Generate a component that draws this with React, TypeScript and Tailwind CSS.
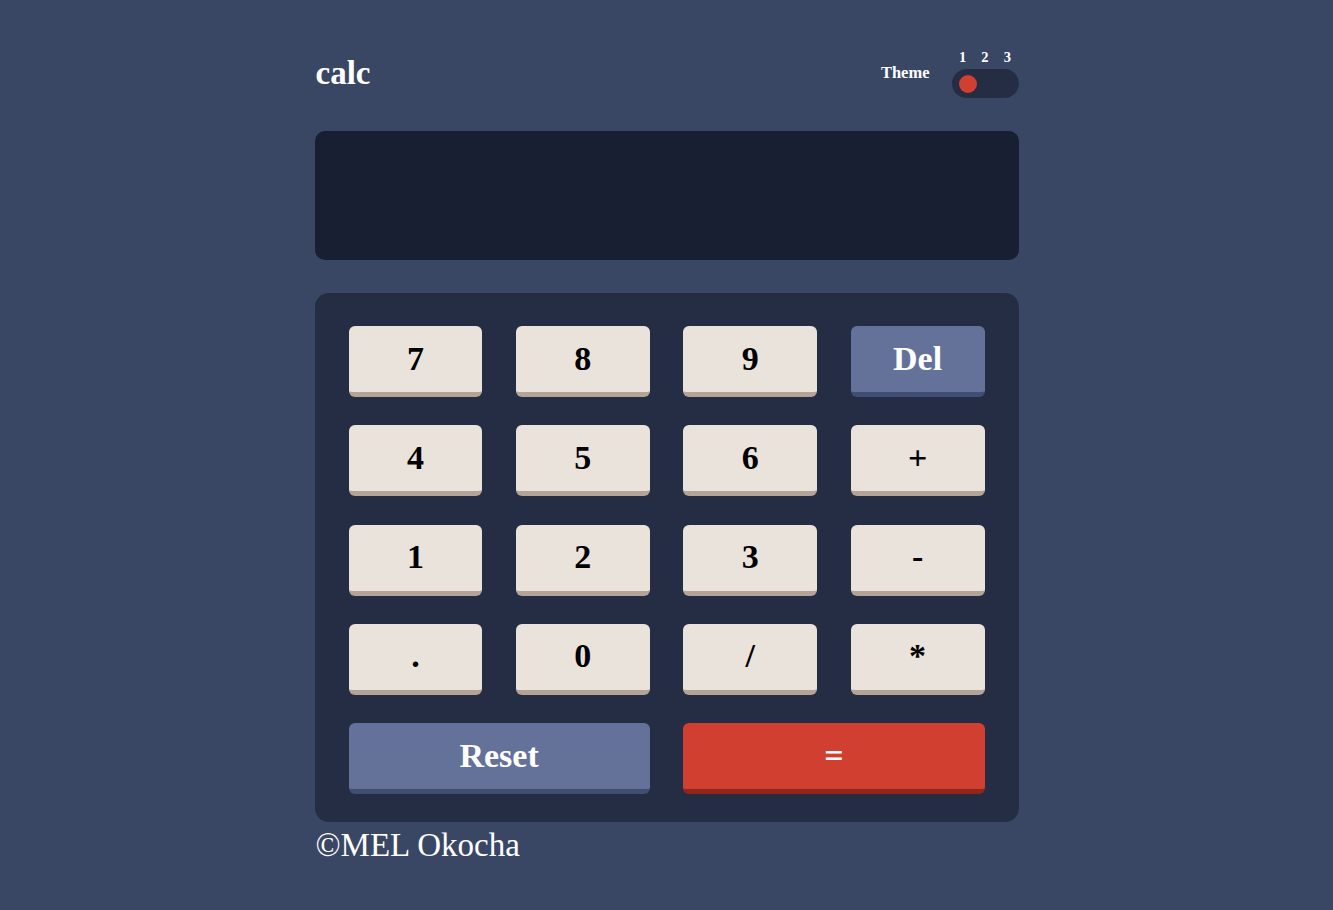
import React from 'react';

type Key = { label: string; kind: 'num' | 'del' | 'reset' | 'eq'; wide?: boolean };

const KEYS: Key[] = [
  { label: '7', kind: 'num' },
  { label: '8', kind: 'num' },
  { label: '9', kind: 'num' },
  { label: 'Del', kind: 'del' },
  { label: '4', kind: 'num' },
  { label: '5', kind: 'num' },
  { label: '6', kind: 'num' },
  { label: '+', kind: 'num' },
  { label: '1', kind: 'num' },
  { label: '2', kind: 'num' },
  { label: '3', kind: 'num' },
  { label: '-', kind: 'num' },
  { label: '.', kind: 'num' },
  { label: '0', kind: 'num' },
  { label: '/', kind: 'num' },
  { label: '*', kind: 'num' },
  { label: 'Reset', kind: 'reset', wide: true },
  { label: '=', kind: 'eq', wide: true },
];

const KIND_CLASSES: Record<Key['kind'], string> = {
  num: 'bg-[#eae3dc] border-[#b3a497] text-black',
  del: 'bg-[#647198] border-[#414e73] text-white',
  reset: 'bg-[#647198] border-[#414e73] text-white',
  eq: 'bg-[#d03f2f] border-[#93261a] text-white',
};

export default function App() {
  return (
    <div
      className="min-h-[910px] w-full bg-[#3a4764] text-white"
      style={{ fontFamily: '"Liberation Serif", "Times New Roman", serif' }}
    >
      <div className="mx-auto w-[704px] pt-[48px]">
        <header className="flex items-center justify-between">
          <h1 className="pl-px text-[33px] font-bold leading-none">calc</h1>
          <div className="flex items-center gap-[22px]">
            <span className="mt-px text-[16.5px] font-bold">Theme</span>
            <div className="flex w-[67px] flex-col gap-[4px]">
              <div className="grid grid-cols-3 pt-px text-center text-[14.5px] font-bold leading-4">
                <span>1</span>
                <span>2</span>
                <span>3</span>
              </div>
              <div className="flex h-[29px] items-center rounded-full bg-[#242d44] px-[7px]">
                <span className="h-[18px] w-[18px] rounded-full bg-[#d03f2f]" />
              </div>
            </div>
          </div>
        </header>

        <div className="mt-[33px] h-[129px] rounded-[10px] bg-[#181f33]" />

        <div className="mt-[33px] grid grid-cols-4 gap-x-[33.5px] gap-y-[28.25px] rounded-[14px] bg-[#242d44] px-[34px] pb-[28px] pt-[33px]">
          {KEYS.map((k) => (
            <button
              key={k.label}
              type="button"
              className={[
                'flex h-[71px] items-center justify-center rounded-[6px] border-b-[5px] pb-[1px] text-[34px] font-bold leading-none',
                k.wide ? 'col-span-2' : '',
                KIND_CLASSES[k.kind],
              ].join(' ')}
            >
              {k.label}
            </button>
          ))}
        </div>

        <p className="mt-[4px] pl-px text-[33px] leading-[38px]">©MEL Okocha</p>
      </div>
    </div>
  );
}
